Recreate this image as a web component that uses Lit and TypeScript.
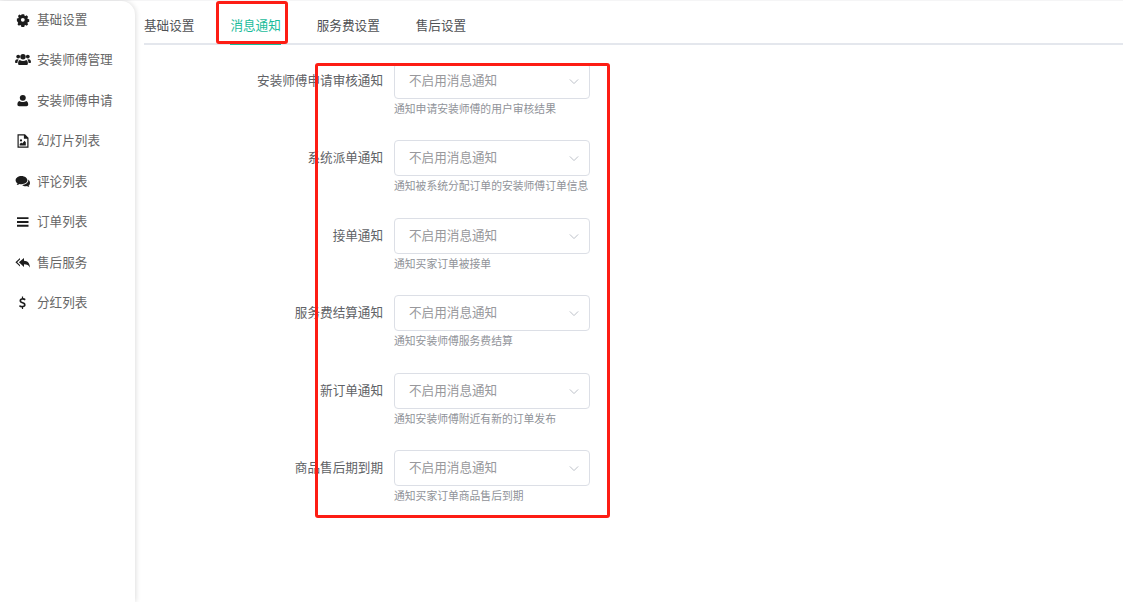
import { LitElement, html, css, svg } from "lit";
import { customElement } from "lit/decorators.js";

const icons: Record<string, unknown> = {
  cog: svg`<path fill-rule="evenodd" d="M5.2.8h3.6l.4 1.8 1.1.5 1.6-1 1.8 2-1 1.5.5 1.1 1.8.4v3.2l-1.8.4-.5 1.1 1 1.5-1.8 2-1.6-1-1.1.5-.4 1.8H5.2l-.4-1.8-1.1-.5-1.6 1-1.8-2 1-1.5-.5-1.1L-.4 9.3V6.1l1.8-.4.5-1.1-1-1.5 1.8-2 1.6 1 1.1-.5zM7 5.4a2.4 2.4 0 1 0 0 4.8 2.4 2.4 0 0 0 0-4.8z" transform="translate(2.2 1.600) scale(.8)"/>`,
  users: svg`<circle cx="3.2" cy="4.6" r="1.9"/><circle cx="12.8" cy="4.6" r="1.9"/><circle cx="8" cy="4.8" r="2.7"/><path d="M0 10.2c0-2 .9-3 2.2-3 .7 0 1.1.3 1.6.6-.9.7-1.3 1.7-1.4 3.2H1c-.7 0-1-.3-1-.8zM16 10.2c0-2-.9-3-2.2-3-.7 0-1.1.3-1.6.6.9.7 1.3 1.7 1.4 3.2H15c.7 0 1-.3 1-.8zM4.800 8c.8.6 1.900 1 3.200 1s2.400-.4 3.200-1c1.200.3 1.700 1.700 1.700 3.400 0 1-.6 1.600-1.500 1.600H4.600c-.9 0-1.500-.6-1.500-1.600 0-1.700.5-3.100 1.700-3.400z"/>`,
  user: svg`<g transform="translate(1.500 .8) scale(.9)"><circle cx="7" cy="4.500" r="3.300"/><path d="M3.300 7.900C4.200 8.700 5.500 9.200 7 9.200s2.800-.5 3.700-1.300c1.600.4 2.300 2.100 2.300 3.900 0 1.200-.8 1.900-1.900 1.900H2.900C1.800 13.700 1 13 1 11.800c0-1.800.7-3.500 2.300-3.900z"/></g>`,
  image: svg`<path fill-rule="evenodd" d="M2.500 1.200h7.500l3.500 3.500v10H2.500zm1.200 1.200v11.100h8.600V5.800H8.900V2.400z"/><circle cx="6" cy="7.400" r="1.100"/><path d="M4.700 12.400v-1.500l1.500-1.300 1 .8 2.400-2.600 1.200 1.400v3.200z"/>`,
  comments: svg`<path d="M6.500 2C3.200 2 .6 3.900.6 6.300c0 1.300.8 2.500 2 3.300-.2.600-.6 1.100-1 1.500 1.100-.1 2.100-.6 2.900-1.100.6.200 1.300.2 2 .2 3.300 0 5.900-1.800 5.900-3.900S9.800 2 6.500 2z"/><path d="M13.200 5.400c.1.300.1.600.1.900 0 2.600-2.800 4.600-6.200 4.700.9.900 2.200 1.300 3.400 1.300.5 0 1-.1 1.500-.2.700.5 1.500.9 2.400 1-.4-.4-.7-.9-.9-1.400 1-.7 1.500-1.600 1.500-2.700 0-1.500-.7-2.700-1.800-3.600z"/>`,
  bars: svg`<path d="M2 3.200h11.500v1.900H2zM2 7h11.500v1.900H2zM2 10.800h11.500v1.900H2z"/>`,
  replyall: svg`<path d="M5 3v1.400L2.200 7.200 5 10v1.400L.4 7.200z"/><path d="M9 3v2.700c3.800.2 5.700 2.300 6 7-1.200-2.600-3-3.500-6-3.500V12L3.900 7.200z"/>`,
  dollar: svg`<path d="M6.900 1.600h1.200v1.500c1 .1 1.800.4 2.500.8l-.6 1.500c-.7-.4-1.500-.7-2.300-.7-1 0-1.500.4-1.500 1 0 .7.600 1 1.700 1.400 1.700.6 2.700 1.300 2.700 2.800 0 1.300-.9 2.200-2.500 2.400v1.600H6.900v-1.500c-1-.1-2.100-.5-2.800-1l.7-1.500c.8.500 1.600.9 2.600.9s1.500-.4 1.500-1c0-.7-.6-1-1.700-1.400-1.600-.5-2.700-1.200-2.700-2.700 0-1.300.9-2.200 2.400-2.400z"/>`,
};

const menu: [string, string][] = [
  ["cog", "基础设置"],
  ["users", "安装师傅管理"],
  ["user", "安装师傅申请"],
  ["image", "幻灯片列表"],
  ["comments", "评论列表"],
  ["bars", "订单列表"],
  ["replyall", "售后服务"],
  ["dollar", "分红列表"],
];

const tabs = ["基础设置", "消息通知", "服务费设置", "售后设置"];

const rows: [string, string][] = [
  ["安装师傅申请审核通知", "通知申请安装师傅的用户审核结果"],
  ["系统派单通知", "通知被系统分配订单的安装师傅订单信息"],
  ["接单通知", "通知买家订单被接单"],
  ["服务费结算通知", "通知安装师傅服务费结算"],
  ["新订单通知", "通知安装师傅附近有新的订单发布"],
  ["商品售后期到期", "通知买家订单商品售后到期"],
];

@customElement("app-root")
export class AppRoot extends LitElement {
  static styles = css`
    :host {
      display: block;
      position: relative;
      width: 1123px;
      height: 602px;
      overflow: hidden;
      background: #fff;
      font-family: "Noto Sans CJK SC", "Noto Sans", sans-serif;
      font-size: 12.6px;
      color: #606266;
    }
    .layout {
      display: flex;
      height: 602px;
      border-top: 1px solid #f5f5f6;
      box-sizing: border-box;
    }
    .side {
      flex: none;
      width: 135px;
      border-top-right-radius: 14px;
      box-shadow: 1px 0 5px rgba(0, 0, 0, 0.13);
      box-sizing: border-box;
    }
    .item {
      display: flex;
      align-items: center;
      height: 40.5px;
      padding-left: 15px;
      padding-bottom: 6px;
      box-sizing: border-box;
      color: #666;
    }
    .item svg {
      flex: none;
      width: 16px;
      height: 16px;
      margin-top: 3px;
      margin-right: 6px;
      fill: #1c1c1c;
    }
    .main {
      flex: 1;
      padding: 0 0 0 9px;
    }
    .tabs {
      display: flex;
      height: 42px;
      border-bottom: 2px solid #e4e7ed;
      box-sizing: content-box;
    }
    .tab {
      position: relative;
      display: flex;
      align-items: center;
      height: 42px;
      padding-top: 7px;
      box-sizing: border-box;
      margin-right: 36px;
      color: #4f5154;
      line-height: 1;
    }
    .tab.on {
      color: #1bbc9b;
    }
    .tab.on::after {
      content: "";
      position: absolute;
      left: 0;
      right: 0;
      bottom: -2px;
      height: 2px;
      background: #1bbc9b;
    }
    .form {
      padding-top: 18px;
    }
    .row {
      display: flex;
      height: 77.45px;
    }
    .label {
      flex: none;
      width: 239px;
      margin-right: 11px;
      height: 36px;
      line-height: 33px;
      text-align: right;
    }
    .select {
      display: flex;
      align-items: center;
      justify-content: space-between;
      width: 196px;
      height: 36px;
      padding: 0 10px 3px 14px;
      border: 1px solid #dcdfe6;
      border-radius: 4px;
      box-sizing: border-box;
      color: #98989c;
    }
    .select svg {
      width: 10px;
      height: 7px;
      margin-top: 4px;
      fill: none;
      stroke: #bcc0c8;
      stroke-width: 1.2;
    }
    .help {
      margin-top: 2px;
      font-size: 10.8px;
      line-height: 15px;
      color: #909399;
    }
    .mark {
      position: absolute;
      border: 3px solid #fd1d14;
      box-sizing: border-box;
      border-radius: 3px;
      pointer-events: none;
    }
    .mark.a {
      left: 216px;
      top: 1px;
      width: 72px;
      height: 43px;
    }
    .mark.b {
      left: 315px;
      top: 63px;
      width: 295px;
      height: 455px;
    }
  `;

  render() {
    return html`
      <div class="layout">
        <nav class="side">
          ${menu.map(
            ([i, t]) => html`<div class="item">
              <svg viewBox="0 0 16 16">${icons[i]}</svg><span>${t}</span>
            </div>`
          )}
        </nav>
        <main class="main">
          <div class="tabs">
            ${tabs.map(
              (t, i) => html`<div class="tab ${i === 1 ? "on" : ""}">${t}</div>`
            )}
          </div>
          <div class="form">
            ${rows.map(
              ([l, h]) => html`<div class="row">
                <div class="label">${l}</div>
                <div>
                  <div class="select">
                    <span>不启用消息通知</span>
                    <svg viewBox="0 0 12 8"><path d="M1 1.500l5 5 5-5" /></svg>
                  </div>
                  <div class="help">${h}</div>
                </div>
              </div>`
            )}
          </div>
        </main>
      </div>
      <div class="mark a"></div>
      <div class="mark b"></div>
    `;
  }
}
